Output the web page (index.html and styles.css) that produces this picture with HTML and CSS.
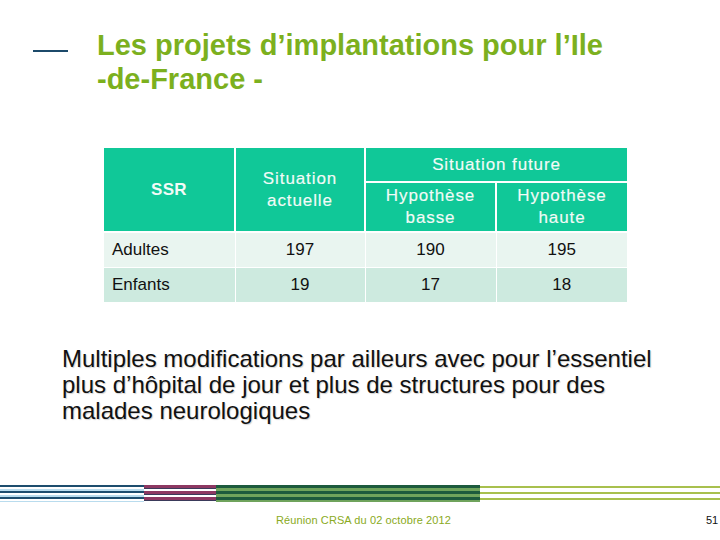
FILE: index.html
```html
<!DOCTYPE html>
<html lang="fr">
<head>
<meta charset="utf-8">
<title>Les projets d'implantations</title>
<link rel="stylesheet" href="styles.css">
</head>
<body>
<div class="slide">
  <header class="head">
    <span class="dash"></span>
    <h1 class="title">Les projets d’implantations pour l’Ile<br>-de-France -</h1>
  </header>
  <table class="grid">
    <colgroup><col class="c1"><col class="c2"><col class="c3"><col class="c4"></colgroup>
    <thead>
      <tr class="h1">
        <th rowspan="2" class="ssr">SSR</th>
        <th rowspan="2">Situation<br>actuelle</th>
        <th colspan="2" class="future">Situation future</th>
      </tr>
      <tr class="h2">
        <th>Hypothèse<br>basse</th>
        <th>Hypothèse<br>haute</th>
      </tr>
    </thead>
    <tbody>
      <tr class="r1"><td class="lab">Adultes</td><td>197</td><td>190</td><td>195</td></tr>
      <tr class="r2"><td class="lab">Enfants</td><td>19</td><td>17</td><td>18</td></tr>
    </tbody>
  </table>
  <p class="note">Multiples modifications par ailleurs avec pour l’essentiel plus d’hôpital de jour et plus de structures pour des malades neurologiques</p>
  <div class="stripes">
    <span class="s-blue"></span><span class="s-mag"></span><span class="s-green"></span><span class="s-olive"></span>
  </div>
  <footer class="foot">
    <span class="meeting">Réunion CRSA du 02 octobre 2012</span>
    <span class="page">51</span>
  </footer>
</div>
</body>
</html>
```
FILE: styles.css
```css
html, body { margin: 0; padding: 0; background: #fff; }
.slide {
  width: 720px; height: 540px; overflow: hidden;
  display: flex; flex-direction: column;
  font-family: "Liberation Sans", Arial, sans-serif;
}
.head { display: flex; align-items: flex-start; padding: 28px 0 0 33px; }
.dash { width: 35px; height: 2px; background: #1c4a6a; margin-top: 22px; flex: none; }
.title {
  margin: 0 0 0 29px; font-size: 29px; line-height: 34px; font-weight: bold;
  color: #7cb01e;
}
.grid {
  margin: 52px 0 0 104px; width: 523px; border-collapse: collapse;
  table-layout: fixed; font-size: 17px;
}
.c1 { width: 131px; } .c2 { width: 130px; } .c3 { width: 131px; } .c4 { width: 131px; }
.grid th {
  background: #10c898; color: #f2fbf7; font-weight: normal; letter-spacing: 0.9px;
  -webkit-text-stroke: 0.15px #f2fbf7;
  border: 2px solid #fff; border-top: 0; line-height: 22px; padding: 0;
  text-align: center;
}
.grid th:first-child { border-left: 0; }
.grid .ssr { font-weight: bold; letter-spacing: 0.3px; -webkit-text-stroke: 0; }
.h1 th { height: 33px; }
.h1 .future { border-right: 0; }
.h2 th { height: 48px; }
.h2 th:last-child { border-right: 0; }
.grid td {
  border: 1px solid #fff; text-align: center; color: #111; height: 34px; padding: 0;
}
.grid td:first-child { border-left: 0; } .grid td:last-child { border-right: 0; }
.grid .lab { text-align: left; padding-left: 8px; }
.r1 td { background: #e9f5f0; }
.r2 td { background: #cdeadf; }
.note {
  margin: 43px 0 0 62px; width: 600px; font-size: 24px; line-height: 26px; color: #111;
  text-shadow: 1px 1px 1px rgba(0,0,0,0.18);
}
.stripes { display: flex; height: 17px; margin-top: 61px; }
.stripes span { display: block; height: 100%; }
.s-blue { width: 144px; background: repeating-linear-gradient(#1d4d6e 0 2px, #ffffff 2px 4px, #b9dcee 4px 6px); }
.s-mag { width: 72px; background: repeating-linear-gradient(#8d3862 0 3px, #3a3a5a 3px 4px, #ffffff 4px 6px); }
.s-green { width: 264px; background: repeating-linear-gradient(#1c5a3d 0 3px, #6fa35c 3px 6px); }
.s-olive { flex: 1; background: repeating-linear-gradient(#ffffff 0 1px, #a8c04e 1px 3px, #ffffff 3px 6px); }
.foot { position: relative; height: 30px; font-size: 11px; }
.meeting { position: absolute; left: 276px; top: 12px; color: #8aaa22; letter-spacing: 0.1px; }
.page { position: absolute; left: 706px; top: 12px; color: #111; }
```
